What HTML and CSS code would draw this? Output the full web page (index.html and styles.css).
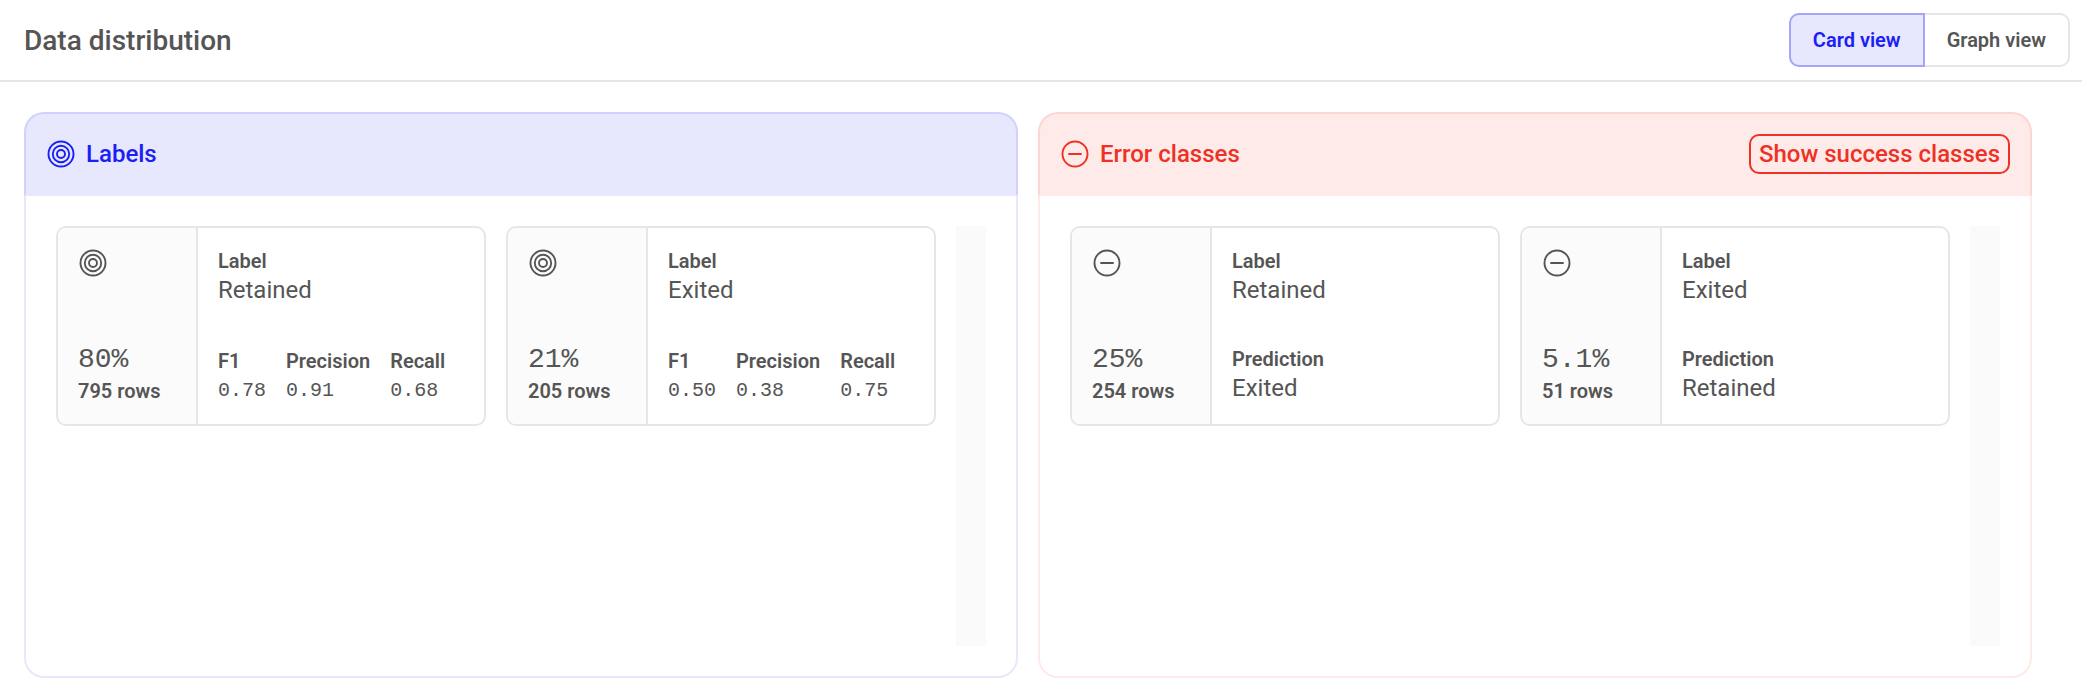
FILE: index.html
```html
<!DOCTYPE html>
<html lang="en">
<head>
    <meta charset="UTF-8">
    <title>Data distribution</title>
    <link rel="stylesheet" href="styles.css">
</head>
<body>
    <!-- shared icons -->
    <svg class="sprite" aria-hidden="true">
        <symbol id="icon-target" viewBox="0 0 30 30">
            <circle cx="15" cy="15" r="12.5"/>
            <circle cx="15" cy="15" r="8.2"/>
            <circle cx="15" cy="15" r="4"/>
        </symbol>
        <symbol id="icon-minus" viewBox="0 0 30 30">
            <circle cx="15" cy="15" r="12.5"/>
            <path d="M9 15h12"/>
        </symbol>
    </svg>

    <header class="page-header">
        <h1 class="title">Data distribution</h1>
        <div class="toggle">
            <button class="toggle-btn active" type="button" aria-pressed="true">Card view</button>
            <button class="toggle-btn" type="button" aria-pressed="false">Graph view</button>
        </div>
    </header>

    <main class="panels">
        <section class="panel blue">
            <div class="panel-header">
                <svg class="icon"><use href="#icon-target"/></svg>
                <h2 class="panel-title">Labels</h2>
            </div>
            <div class="panel-body">
                <div class="cards">
                    <article class="card">
                        <div class="card-side">
                            <svg class="icon"><use href="#icon-target"/></svg>
                            <div>
                                <div class="percent">80%</div>
                                <div class="label">795 rows</div>
                            </div>
                        </div>
                        <div class="card-main">
                            <div>
                                <div class="label">Label</div>
                                <div class="value">Retained</div>
                            </div>
                            <div class="metrics">
                                <div class="metric"><div class="label">F1</div><div class="number">0.78</div></div>
                                <div class="metric"><div class="label">Precision</div><div class="number">0.91</div></div>
                                <div class="metric"><div class="label">Recall</div><div class="number">0.68</div></div>
                            </div>
                        </div>
                    </article>
                    <article class="card">
                        <div class="card-side">
                            <svg class="icon"><use href="#icon-target"/></svg>
                            <div>
                                <div class="percent">21%</div>
                                <div class="label">205 rows</div>
                            </div>
                        </div>
                        <div class="card-main">
                            <div>
                                <div class="label">Label</div>
                                <div class="value">Exited</div>
                            </div>
                            <div class="metrics">
                                <div class="metric"><div class="label">F1</div><div class="number">0.50</div></div>
                                <div class="metric"><div class="label">Precision</div><div class="number">0.38</div></div>
                                <div class="metric"><div class="label">Recall</div><div class="number">0.75</div></div>
                            </div>
                        </div>
                    </article>
                </div>
                <div class="track"></div>
            </div>
        </section>

        <section class="panel red">
            <div class="panel-header">
                <svg class="icon"><use href="#icon-minus"/></svg>
                <h2 class="panel-title">Error classes</h2>
                <button class="success-btn" type="button">Show success classes</button>
            </div>
            <div class="panel-body">
                <div class="cards">
                    <article class="card">
                        <div class="card-side">
                            <svg class="icon"><use href="#icon-minus"/></svg>
                            <div>
                                <div class="percent">25%</div>
                                <div class="label">254 rows</div>
                            </div>
                        </div>
                        <div class="card-main">
                            <div>
                                <div class="label">Label</div>
                                <div class="value">Retained</div>
                            </div>
                            <div>
                                <div class="label">Prediction</div>
                                <div class="value">Exited</div>
                            </div>
                        </div>
                    </article>
                    <article class="card">
                        <div class="card-side">
                            <svg class="icon"><use href="#icon-minus"/></svg>
                            <div>
                                <div class="percent">5.1%</div>
                                <div class="label">51 rows</div>
                            </div>
                        </div>
                        <div class="card-main">
                            <div>
                                <div class="label">Label</div>
                                <div class="value">Exited</div>
                            </div>
                            <div>
                                <div class="label">Prediction</div>
                                <div class="value">Retained</div>
                            </div>
                        </div>
                    </article>
                </div>
                <div class="track"></div>
            </div>
        </section>
    </main>
</body>
</html>
```

FILE: styles.css
```css
* {
    box-sizing: border-box;
}

body {
    margin: 0;
    background: #fff;
    color: #555;
    font-family: Roboto, "Liberation Sans", sans-serif;
}

button {
    font-family: inherit;
    cursor: pointer;
}

.sprite {
    display: none;
}

.icon {
    flex: none;
    display: block;
    width: 30px;
    height: 30px;
    fill: none;
    stroke: currentColor;
    stroke-width: 1.9;
    stroke-linecap: round;
}

/* top bar */
.page-header {
    display: flex;
    justify-content: space-between;
    align-items: center;
    padding: 13px 12px 13px 24px;
    border-bottom: 2px solid #e6e6e6;
}

.title {
    margin: 0;
    padding-top: 2px;
    font-size: 28px;
    line-height: 34px;
    font-weight: 500;
}

.toggle {
    display: flex;
}

.toggle-btn {
    height: 54px;
    padding: 0 22px;
    background: #fff;
    border: 2px solid #e6e6e6;
    border-left: none;
    border-radius: 0 10px 10px 0;
    color: #555;
    font-size: 20px;
    font-weight: 600;
}

.toggle-btn.active {
    background: #e7e7fd;
    border: 2px solid #a3a5fa;
    border-radius: 10px 0 0 10px;
    color: #1a20f5;
}

/* panels */
.panels {
    display: flex;
    gap: 20px;
    padding: 30px 50px 18px 24px;
}

.panel {
    flex: 1;
    min-width: 0;
}

.panel-header {
    display: flex;
    align-items: center;
    gap: 10px;
    height: 84px;
    padding: 0 20px;
    border: 2px solid;
    border-radius: 20px 20px 0 0;
}

.panel-title {
    margin: 0;
    font-size: 24px;
    line-height: 32px;
    font-weight: 500;
}

.panel-body {
    display: flex;
    gap: 20px;
    padding: 30px;
    border: 2px solid;
    border-top: none;
    border-radius: 0 0 20px 20px;
}

.blue .panel-header {
    background: #e7e7fd;
    border-color: #d0d1fd #d0d1fd #e7e7fd;
    color: #1a20f5;
}

.blue .panel-body {
    border-color: #e7e7fd;
}

.red .panel-header {
    background: #feeae8;
    border-color: #fdd5d2 #fdd5d2 #feeae8;
    color: #ee3124;
}

.red .panel-body {
    border-color: #feeae8;
}

.success-btn {
    height: 40px;
    margin-left: auto;
    padding: 0 8px;
    background: none;
    border: 2px solid #ee3124;
    border-radius: 10px;
    color: #ee3124;
    font-size: 24px;
    line-height: 32px;
    font-weight: 500;
}

/* cards */
.cards {
    flex: 1;
    display: grid;
    grid-template-columns: 1fr 1fr;
    align-items: start;
    gap: 20px;
}

.track {
    width: 30px;
    height: 420px;
    background: #fafafa;
}

.card {
    display: flex;
    height: 200px;
    border: 2px solid #e6e6e6;
    border-radius: 10px;
    overflow: hidden;
}

.card-side,
.card-main {
    display: flex;
    flex-direction: column;
    justify-content: space-between;
    padding: 20px;
}

.card-side {
    flex: none;
    width: 140px;
    background: #fbfbfb;
    border-right: 2px solid #e6e6e6;
}

.card-main {
    flex: 1;
}

.label {
    font-size: 20px;
    line-height: 26px;
    font-weight: 600;
    white-space: nowrap;
}

.value {
    font-size: 24px;
    line-height: 32px;
}

.percent {
    font-family: "Liberation Mono", monospace;
    font-size: 28px;
    line-height: 36px;
}

.metrics {
    display: flex;
    gap: 20px;
}

.metric {
    display: flex;
    flex-direction: column;
    gap: 4px;
}

.number {
    font-family: "Liberation Mono", monospace;
    font-size: 20px;
    line-height: 26px;
}
```
